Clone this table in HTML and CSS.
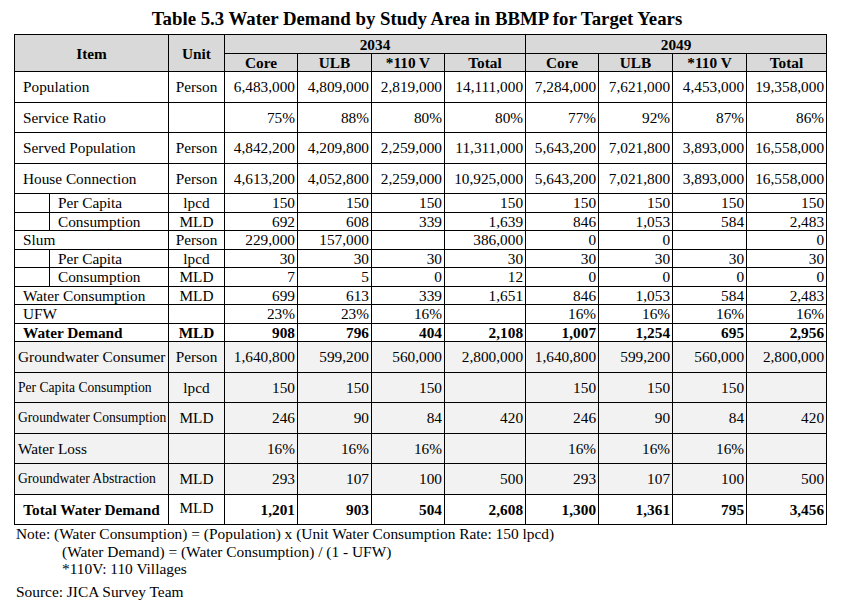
FILE: index.html
```html
<!DOCTYPE html>
<html lang="en">
<head>
<meta charset="utf-8">
<title>Table 5.3 Water Demand</title>
<link rel="stylesheet" href="styles.css">
</head>
<body>
<h1 class="title">Table 5.3 Water Demand by Study Area in BBMP for Target Years</h1>
<table class="demand">
  <colgroup>
    <col class="c-ind"><col class="c-item"><col class="c-unit">
    <col class="c-73"><col class="c-74"><col class="c-73"><col class="c-81">
    <col class="c-73"><col class="c-74"><col class="c-74"><col class="c-80">
  </colgroup>
  <thead>
    <tr class="hr1"><th colspan="2" rowspan="2">Item</th><th rowspan="2">Unit</th><th colspan="4">2034</th><th colspan="4">2049</th></tr>
    <tr class="hr2"><th>Core</th><th>ULB</th><th>*110 V</th><th>Total</th><th>Core</th><th>ULB</th><th>*110 V</th><th>Total</th></tr>
  </thead>
  <tbody>
    <tr class="tall"><td colspan="2" class="item">Population</td><td class="unit">Person</td><td>6,483,000</td><td>4,809,000</td><td>2,819,000</td><td>14,111,000</td><td>7,284,000</td><td>7,621,000</td><td>4,453,000</td><td>19,358,000</td></tr>
    <tr class="tall"><td colspan="2" class="item">Service Ratio</td><td class="unit"></td><td>75%</td><td>88%</td><td>80%</td><td>80%</td><td>77%</td><td>92%</td><td>87%</td><td>86%</td></tr>
    <tr class="tall"><td colspan="2" class="item">Served Population</td><td class="unit">Person</td><td>4,842,200</td><td>4,209,800</td><td>2,259,000</td><td>11,311,000</td><td>5,643,200</td><td>7,021,800</td><td>3,893,000</td><td>16,558,000</td></tr>
    <tr class="tall"><td colspan="2" class="item">House Connection</td><td class="unit">Person</td><td>4,613,200</td><td>4,052,800</td><td>2,259,000</td><td>10,925,000</td><td>5,643,200</td><td>7,021,800</td><td>3,893,000</td><td>16,558,000</td></tr>
    <tr class="short"><td class="ind"></td><td class="item">Per Capita</td><td class="unit">lpcd</td><td>150</td><td>150</td><td>150</td><td>150</td><td>150</td><td>150</td><td>150</td><td>150</td></tr>
    <tr class="short"><td class="ind"></td><td class="item">Consumption</td><td class="unit">MLD</td><td>692</td><td>608</td><td>339</td><td>1,639</td><td>846</td><td>1,053</td><td>584</td><td>2,483</td></tr>
    <tr class="short"><td colspan="2" class="item">Slum</td><td class="unit">Person</td><td>229,000</td><td>157,000</td><td></td><td>386,000</td><td>0</td><td>0</td><td></td><td>0</td></tr>
    <tr class="short"><td class="ind"></td><td class="item">Per Capita</td><td class="unit">lpcd</td><td>30</td><td>30</td><td>30</td><td>30</td><td>30</td><td>30</td><td>30</td><td>30</td></tr>
    <tr class="short"><td class="ind"></td><td class="item">Consumption</td><td class="unit">MLD</td><td>7</td><td>5</td><td>0</td><td>12</td><td>0</td><td>0</td><td>0</td><td>0</td></tr>
    <tr class="short"><td colspan="2" class="item">Water Consumption</td><td class="unit">MLD</td><td>699</td><td>613</td><td>339</td><td>1,651</td><td>846</td><td>1,053</td><td>584</td><td>2,483</td></tr>
    <tr class="short"><td colspan="2" class="item">UFW</td><td class="unit"></td><td>23%</td><td>23%</td><td>16%</td><td></td><td>16%</td><td>16%</td><td>16%</td><td>16%</td></tr>
    <tr class="short bold"><td colspan="2" class="item">Water Demand</td><td class="unit">MLD</td><td>908</td><td>796</td><td>404</td><td>2,108</td><td>1,007</td><td>1,254</td><td>695</td><td>2,956</td></tr>
    <tr class="tall gw"><td colspan="2" class="item gw-item">Groundwater Consumer</td><td class="unit">Person</td><td>1,640,800</td><td>599,200</td><td>560,000</td><td>2,800,000</td><td>1,640,800</td><td>599,200</td><td>560,000</td><td>2,800,000</td></tr>
    <tr class="tall gw"><td colspan="2" class="item gw-item small">Per Capita Consumption</td><td class="unit">lpcd</td><td>150</td><td>150</td><td>150</td><td></td><td>150</td><td>150</td><td>150</td><td></td></tr>
    <tr class="tall gw"><td colspan="2" class="item gw-item small">Groundwater Consumption</td><td class="unit">MLD</td><td>246</td><td>90</td><td>84</td><td>420</td><td>246</td><td>90</td><td>84</td><td>420</td></tr>
    <tr class="tall gw"><td colspan="2" class="item gw-item">Water Loss</td><td class="unit"></td><td>16%</td><td>16%</td><td>16%</td><td></td><td>16%</td><td>16%</td><td>16%</td><td></td></tr>
    <tr class="tall gw"><td colspan="2" class="item gw-item small">Groundwater Abstraction</td><td class="unit">MLD</td><td>293</td><td>107</td><td>100</td><td>500</td><td>293</td><td>107</td><td>100</td><td>500</td></tr>
    <tr class="tall bold"><td colspan="2" class="item total-item">Total Water Demand</td><td class="unit normal raised">MLD</td><td>1,201</td><td>903</td><td>504</td><td>2,608</td><td>1,300</td><td>1,361</td><td>795</td><td>3,456</td></tr>
  </tbody>
</table>
<div class="notes">
  <p class="note-line">Note: (Water Consumption) = (Population) x (Unit Water Consumption Rate: 150 lpcd)</p>
  <p class="note-line note-sub">(Water Demand) = (Water Consumption) / (1 - UFW)</p>
  <p class="note-line note-sub">*110V: 110 Villages</p>
  <p class="source">Source: JICA Survey Team</p>
</div>
</body>
</html>
```

FILE: styles.css
```css
html, body {
  margin: 0;
  padding: 0;
  background: #ffffff;
}

body {
  font-family: "Liberation Serif", "Times New Roman", serif;
  color: #000000;
}

.title {
  box-sizing: border-box;
  width: 813px;
  margin: 8px 0 5px 14px;
  padding-right: 7px;
  font-size: 18.8px;
  line-height: 21px;
  font-weight: bold;
  text-align: center;
}

.demand {
  margin-left: 14px;
  width: 813px;
  table-layout: fixed;
  border-collapse: collapse;
  font-size: 15.3px;
}

.c-ind { width: 35px; }
.c-item { width: 119px; }
.c-unit { width: 56px; }
.c-73 { width: 73px; }
.c-74 { width: 74px; }
.c-80 { width: 80px; }
.c-81 { width: 81px; }

.demand th,
.demand td {
  border: 1px solid #000000;
  padding: 0 2px 0 0;
  line-height: 17px;
  white-space: nowrap;
  overflow: hidden;
  vertical-align: middle;
}

.demand th {
  background: #d9d9d9;
  font-weight: bold;
  text-align: center;
  padding: 0;
}

.demand .hr1 { height: 19px; }
.demand .hr2 { height: 18px; }

.demand td {
  text-align: right;
}

.demand .item {
  text-align: left;
  padding-left: 8px;
}

.demand .unit {
  text-align: center;
  padding: 0;
}

.demand .tall { height: 30.5px; }
.demand .short { height: 18.5px; }

.demand .bold td { font-weight: bold; }
.demand .bold td.normal { font-weight: normal; }
.demand td.raised { padding-bottom: 4px; }

.demand .gw td { background: #f2f2f2; }
.demand .gw-item { padding-left: 3px; }
.demand .small { font-size: 13.6px; }

.demand .total-item {
  text-align: center;
  padding: 0;
}

.notes {
  padding-left: 16px;
  font-size: 15.4px;
}

.note-line {
  margin: 0;
  line-height: 17.5px;
}

.note-sub {
  padding-left: 46px;
}

.source {
  margin: 5px 0 0;
  line-height: 17.5px;
}
```
